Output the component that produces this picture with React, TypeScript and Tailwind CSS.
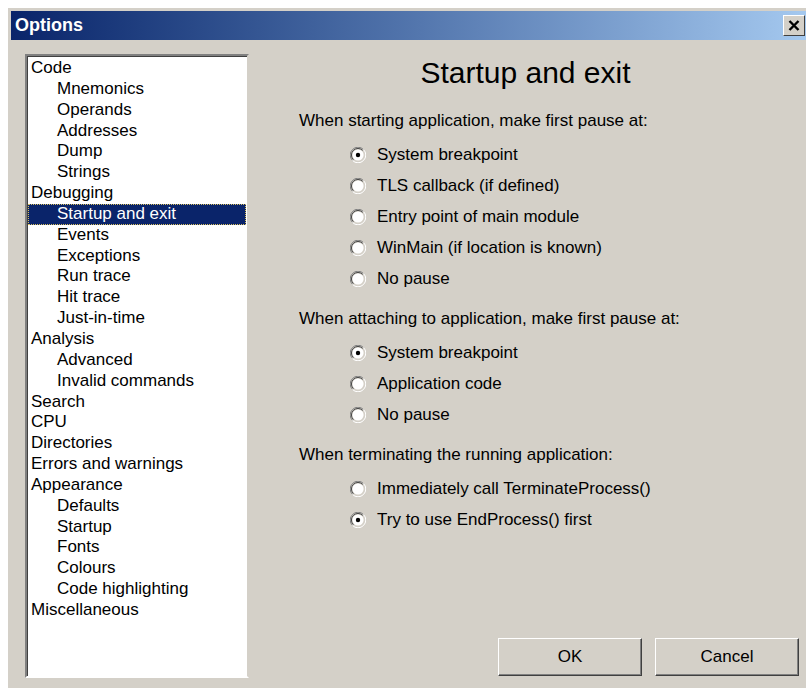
import { useState } from 'react';

const tree: { label: string; depth: number }[] = [
    { label: 'Code', depth: 0 },
    { label: 'Mnemonics', depth: 1 },
    { label: 'Operands', depth: 1 },
    { label: 'Addresses', depth: 1 },
    { label: 'Dump', depth: 1 },
    { label: 'Strings', depth: 1 },
    { label: 'Debugging', depth: 0 },
    { label: 'Startup and exit', depth: 1 },
    { label: 'Events', depth: 1 },
    { label: 'Exceptions', depth: 1 },
    { label: 'Run trace', depth: 1 },
    { label: 'Hit trace', depth: 1 },
    { label: 'Just-in-time', depth: 1 },
    { label: 'Analysis', depth: 0 },
    { label: 'Advanced', depth: 1 },
    { label: 'Invalid commands', depth: 1 },
    { label: 'Search', depth: 0 },
    { label: 'CPU', depth: 0 },
    { label: 'Directories', depth: 0 },
    { label: 'Errors and warnings', depth: 0 },
    { label: 'Appearance', depth: 0 },
    { label: 'Defaults', depth: 1 },
    { label: 'Startup', depth: 1 },
    { label: 'Fonts', depth: 1 },
    { label: 'Colours', depth: 1 },
    { label: 'Code highlighting', depth: 1 },
    { label: 'Miscellaneous', depth: 0 },
];

const groups = [
    {
        title: 'When starting application, make first pause at:',
        options: ['System breakpoint', 'TLS callback (if defined)', 'Entry point of main module', 'WinMain (if location is known)', 'No pause'],
        initial: 0,
    },
    {
        title: 'When attaching to application, make first pause at:',
        options: ['System breakpoint', 'Application code', 'No pause'],
        initial: 0,
    },
    {
        title: 'When terminating the running application:',
        options: ['Immediately call TerminateProcess()', 'Try to use EndProcess() first'],
        initial: 1,
    },
];

// classic sunken radio bullet
const Radio = ({ checked }: { checked: boolean }) => (
    <svg width="16" height="16" viewBox="0 0 16 16" className="shrink-0">
        <path d="M13.5 2.5 A7.5 7.5 0 0 0 2.5 13.5" fill="none" stroke="#808080" strokeWidth="1" />
        <path d="M12.6 3.4 A6.3 6.3 0 0 0 3.4 12.6" fill="none" stroke="#404040" strokeWidth="1" />
        <path d="M2.5 13.5 A7.5 7.5 0 0 0 13.5 2.5" fill="none" stroke="#ffffff" strokeWidth="1" />
        <circle cx="8" cy="8" r="5.6" fill="#ffffff" />
        {checked && <circle cx="8" cy="8" r="2.2" fill="#000000" />}
    </svg>
);

const Button = ({ label }: { label: string }) => (
    <button className="w-[144px] h-[38px] bg-[#d4d0c8] border border-t-white border-l-white border-r-[#404040] border-b-[#404040] shadow-[inset_-1px_-1px_0_#808080] text-[17px] text-black">
        {label}
    </button>
);

export default function App() {
    const [selected, setSelected] = useState(7);
    const [choices, setChoices] = useState(groups.map(g => g.initial));

    return (
        <div className="w-[806px] h-[690px] bg-white overflow-hidden pt-[8px] pl-[8px] font-['Liberation_Sans',Arial,sans-serif]">
            <div className="w-[806px] h-[680px] bg-[#d4d0c8] border-t border-l border-t-[#d4d0c8] border-l-[#d4d0c8] p-[2px] flex flex-col">
                <div className="h-[29px] bg-gradient-to-r from-[#0a246a] to-[#a6caf0] flex items-center justify-between pl-[4px] pr-[7px]">
                    <span className="text-white font-bold text-[18px]">Options</span>
                    <div className="w-[22px] h-[21px] bg-[#d4d0c8] border border-t-white border-l-white border-r-[#404040] border-b-[#404040] flex items-center justify-center">
                        <svg width="12" height="11" viewBox="0 0 12 11">
                            <path d="M1.5 1 L10.5 10 M10.5 1 L1.5 10" stroke="#000" strokeWidth="2.4" />
                        </svg>
                    </div>
                </div>

                <div className="flex flex-1 pt-[14px] pl-[14px]">
                    <div className="w-[224px] h-[624px] bg-white border-2 border-t-[#808080] border-l-[#808080] border-r-[#d4d0c8] border-b-[#ffffff] shadow-[inset_1px_1px_0_#404040] pt-[2px] pl-[1px]">
                        {tree.map((item, i) => (
                            <div
                                key={item.label}
                                onClick={() => setSelected(i)}
                                className={`h-[20.85px] leading-[20px] text-[17px] ${item.depth ? 'pl-[29px]' : 'pl-[3px]'} ${
                                    selected === i
                                        ? 'bg-[#0a246a] text-white outline outline-1 outline-dotted outline-[#d8c060] -outline-offset-1 mr-[1px]'
                                        : 'text-black'
                                }`}
                            >
                                {item.label}
                            </div>
                        ))}
                    </div>

                    <div className="flex-1 flex flex-col pl-[50px] pr-[4px]">
                        <h1 className="text-[30px] leading-[34px] text-black text-center pr-[56px] mt-[2px] mb-[21px]">Startup and exit</h1>
                        {groups.map((g, gi) => (
                            <div key={g.title} className="mb-[15px]">
                                <div className="text-[17px] leading-[20px] text-black mb-[8px]">{g.title}</div>
                                {g.options.map((opt, oi) => (
                                    <div
                                        key={opt}
                                        className="h-[31px] flex items-center gap-[11px] pl-[51px] text-[17px] text-black cursor-default"
                                        onClick={() => setChoices(c => c.map((v, k) => (k === gi ? oi : v)))}
                                    >
                                        <Radio checked={choices[gi] === oi} />
                                        <span>{opt}</span>
                                    </div>
                                ))}
                            </div>
                        ))}
                        <div className="mt-auto mb-[10px] flex justify-end gap-[13px] pr-[9px]">
                            <Button label="OK" />
                            <Button label="Cancel" />
                        </div>
                    </div>
                </div>
            </div>
        </div>
    );
}
